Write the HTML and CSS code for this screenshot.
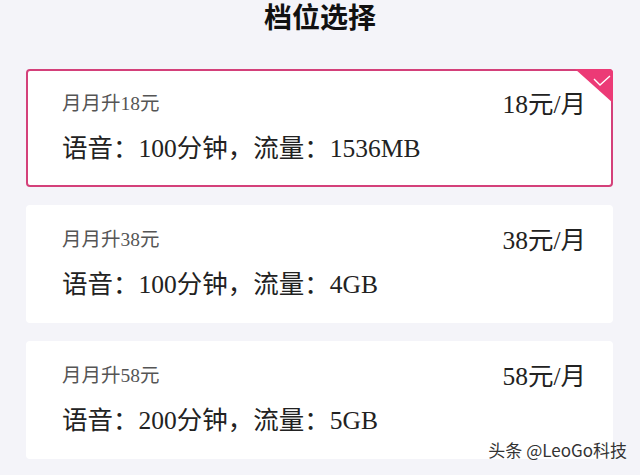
FILE: index.html
```html
<!DOCTYPE html>
<html lang="zh-CN">
<head>
    <meta charset="UTF-8">
    <meta name="viewport" content="width=device-width, initial-scale=1.0">
    <title>档位选择</title>
    <link rel="stylesheet" href="styles.css">
</head>
<body>
    <div class="page">
        <h2 class="title">档位选择</h2>
        <div class="plans">
            <div class="plan selected">
                <div class="row">
                    <span class="name">月月升18元</span>
                    <span class="price">18元/月</span>
                </div>
                <div class="detail">语音：100分钟，流量：1536MB</div>
                <span class="tick">
                    <svg width="38" height="34" viewBox="0 0 38 34">
                        <path d="M0 0 H34 A4 4 0 0 1 38 4 V34 Z" fill="#ec3a76"/>
                        <path d="M19 10 L25 16 L35 7" fill="none" stroke="#fff" stroke-width="1.4"/>
                    </svg>
                </span>
            </div>
            <div class="plan">
                <div class="row">
                    <span class="name">月月升38元</span>
                    <span class="price">38元/月</span>
                </div>
                <div class="detail">语音：100分钟，流量：4GB</div>
            </div>
            <div class="plan">
                <div class="row">
                    <span class="name">月月升58元</span>
                    <span class="price">58元/月</span>
                </div>
                <div class="detail">语音：200分钟，流量：5GB</div>
            </div>
        </div>
        <div class="mark">头条 @LeoGo科技</div>
    </div>
</body>
</html>
```

FILE: styles.css
```css
body {
    margin: 0;
    background-color: #f4f4f9;
    font-family: "Liberation Serif", "Noto Sans CJK SC", serif;
}
.page {
    position: relative;
    width: 640px;
    height: 475px;
    overflow: hidden;
}
.title {
    margin: 0;
    padding-top: 2px;
    height: 30px;
    line-height: 28px;
    text-align: center;
    font-family: "Noto Sans CJK SC", sans-serif;
    font-size: 28px;
    font-weight: bold;
    color: #111;
}
.plans {
    display: flex;
    flex-direction: column;
    gap: 18px;
    margin: 37px 27px 0 26px;
}
.plan {
    position: relative;
    height: 118px;
    box-sizing: border-box;
    padding: 15px 25px 0 34px;
    background: #fff;
    border: 2px solid #fff;
    border-radius: 4px;
}
.plan.selected {
    border-color: #d4407a;
}
.row {
    display: flex;
    justify-content: space-between;
    align-items: center;
    height: 30px;
}
.name {
    font-size: 19.5px;
    color: #555;
}
.price {
    font-size: 25.5px;
    color: #222;
}
.detail {
    margin-top: 16px;
    font-size: 25.5px;
    line-height: 34px;
    color: #222;
}
.tick {
    position: absolute;
    top: -2px;
    right: -2px;
    line-height: 0;
}
.mark {
    position: absolute;
    right: 13px;
    bottom: 13px;
    font-family: "Noto Sans CJK SC", sans-serif;
    font-size: 17px;
    color: #333;
    text-shadow: 0 0 2px #fff;
}
```
